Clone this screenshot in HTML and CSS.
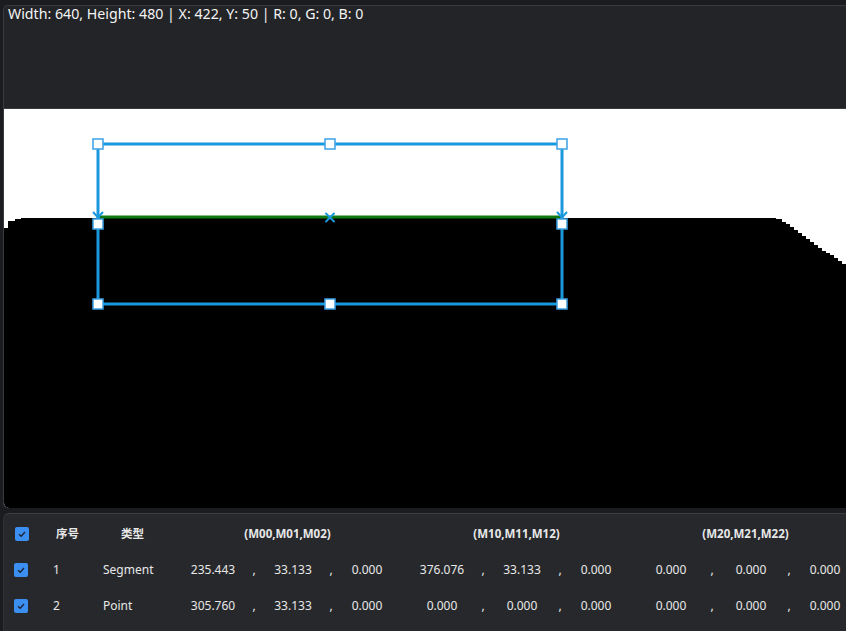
FILE: index.html
```html
<!DOCTYPE html>
<html>
<head>
<meta charset="utf-8">
<link rel="stylesheet" href="styles.css">
</head>
<body>
<div class="viewer">
  <div class="info">Width: 640, Height: 480 | X: 422, Y: 50 | R: 0, G: 0, B: 0</div>
  <div class="canvas">
    <svg class="img" width="842" height="399" viewBox="4 109 842 399" xmlns="http://www.w3.org/2000/svg">
      <rect x="4" y="109" width="842" height="399" fill="#ffffff"/>
      <polygon fill="#000000" points="4,228 8,228 8,221 15,221 15,219 21,219 21,218 776,218 776,219 782,219 782,222 786,222 786,224 790,224 790,227 794,227 794,230 798,230 798,233 802,233 802,236 806,236 806,239 810,239 810,242 814,242 814,245 818,245 818,248 822,248 822,251 826,251 826,253 830,253 830,255 834,255 834,258 838,258 838,261 842,261 842,264 846,264 846,508 4,508"/>
      <line x1="98" y1="217" x2="562" y2="217" stroke="#0f7a0f" stroke-width="3"/>
      <g stroke="#1a98de" stroke-width="3" fill="none">
        <rect x="98" y="144" width="464" height="160"/>
      </g>
      <g stroke="#1a98de" stroke-width="2" fill="none" stroke-linecap="round">
        <polyline points="93.5,212.5 98,217.5 102.5,212.5"/>
        <polyline points="557.5,212.5 562,217.5 566.5,212.5"/>
        <line x1="326" y1="213.5" x2="334" y2="221.5"/>
        <line x1="334" y1="213.5" x2="326" y2="221.5"/>
      </g>
      <g fill="#ffffff" stroke="#3aa2e6" stroke-width="1.5">
        <rect x="93" y="139" width="10" height="10"/>
        <rect x="325" y="139" width="10" height="10"/>
        <rect x="557" y="139" width="10" height="10"/>
        <rect x="93" y="219" width="10" height="10"/>
        <rect x="557" y="219" width="10" height="10"/>
        <rect x="93" y="299" width="10" height="10"/>
        <rect x="325" y="299" width="10" height="10"/>
        <rect x="557" y="299" width="10" height="10"/>
      </g>
    </svg>
  </div>
</div>
<div class="table">
  <div class="row head">
    <div class="cell chk"><span class="box"><svg width="14" height="14" viewBox="0 0 14 14"><polyline points="4,7.2 6.2,9.2 10,5" fill="none" stroke="#1d2435" stroke-width="1.4"/></svg></span></div>
    <div class="cell idx-h">序号</div>
    <div class="cell type-h">类型</div>
    <div class="cell grp-h">(M00,M01,M02)</div>
    <div class="cell grp-h">(M10,M11,M12)</div>
    <div class="cell grp-h">(M20,M21,M22)</div>
  </div>
  <div class="row">
    <div class="cell chk"><span class="box"><svg width="14" height="14" viewBox="0 0 14 14"><polyline points="4,7.2 6.2,9.2 10,5" fill="none" stroke="#1d2435" stroke-width="1.4"/></svg></span></div>
    <div class="cell idx">1</div>
    <div class="cell type">Segment</div>
    <div class="cell grp"><span>235.443</span><span>,</span><span>33.133</span><span>,</span><span>0.000</span></div>
    <div class="cell grp"><span>376.076</span><span>,</span><span>33.133</span><span>,</span><span>0.000</span></div>
    <div class="cell grp"><span>0.000</span><span>,</span><span>0.000</span><span>,</span><span>0.000</span></div>
  </div>
  <div class="row">
    <div class="cell chk"><span class="box"><svg width="14" height="14" viewBox="0 0 14 14"><polyline points="4,7.2 6.2,9.2 10,5" fill="none" stroke="#1d2435" stroke-width="1.4"/></svg></span></div>
    <div class="cell idx">2</div>
    <div class="cell type">Point</div>
    <div class="cell grp"><span>305.760</span><span>,</span><span>33.133</span><span>,</span><span>0.000</span></div>
    <div class="cell grp"><span>0.000</span><span>,</span><span>0.000</span><span>,</span><span>0.000</span></div>
    <div class="cell grp"><span>0.000</span><span>,</span><span>0.000</span><span>,</span><span>0.000</span></div>
  </div>
</div>
</body>
</html>
```

FILE: styles.css
```css
html, body {
  margin: 0;
  padding: 0;
  background: #1b1c1f;
  width: 846px;
  height: 631px;
  overflow: hidden;
  font-family: "Noto Sans", "Noto Sans CJK SC", sans-serif;
}

.viewer {
  margin: 5px 0 0 3px;
  width: 843px;
  height: 503px;
  background: #232427;
  border-top: 1px solid #3a3b3f;
  border-left: 1px solid #3a3b3f;
  border-radius: 5px 0 0 5px;
  box-sizing: border-box;
  display: flex;
  flex-direction: column;
  overflow: hidden;
}

.info {
  height: 103px;
  padding: 0 0 0 4px;
  color: #f4f4f4;
  font-size: 14.2px;
  line-height: 16px;
  border-bottom: 1px solid #3a3b3f;
  box-sizing: border-box;
}

.canvas {
  height: 399px;
  overflow: hidden;
  border-bottom-left-radius: 5px;
}

.img {
  display: block;
}

.table {
  margin: 5px 0 0 3px;
  width: 843px;
  height: 118px;
  background: #27282c;
  border-top: 1px solid #3c3d41;
  border-left: 1px solid #303135;
  border-radius: 6px 0 0 0;
  box-sizing: border-box;
  padding-top: 2px;
  color: #e8e8e8;
  font-size: 12px;
}

.row {
  display: grid;
  grid-template-columns: 34px 62px 73px 229px 229px 229px;
  height: 36px;
  align-items: center;
  white-space: nowrap;
}

.head {
  font-weight: bold;
  font-size: 11.5px;
}

.cell {
  line-height: 16px;
}

.chk {
  display: flex;
  justify-content: center;
}

.box {
  width: 14px;
  height: 14px;
  background: #3b8ff0;
  border-radius: 2px;
  display: block;
}

.box svg {
  display: block;
}

.head .box {
  margin-left: 1px;
}

.idx-h { padding-left: 18px; }
.type-h { padding-left: 21px; }
.idx { padding-left: 15px; }
.type { padding-left: 3px; }

.grp-h {
  text-align: center;
}

.grp {
  display: grid;
  grid-template-columns: 38px 44px 34px 42px 30px;
  padding-left: 21px;
}

.grp span {
  justify-self: center;
}
```
